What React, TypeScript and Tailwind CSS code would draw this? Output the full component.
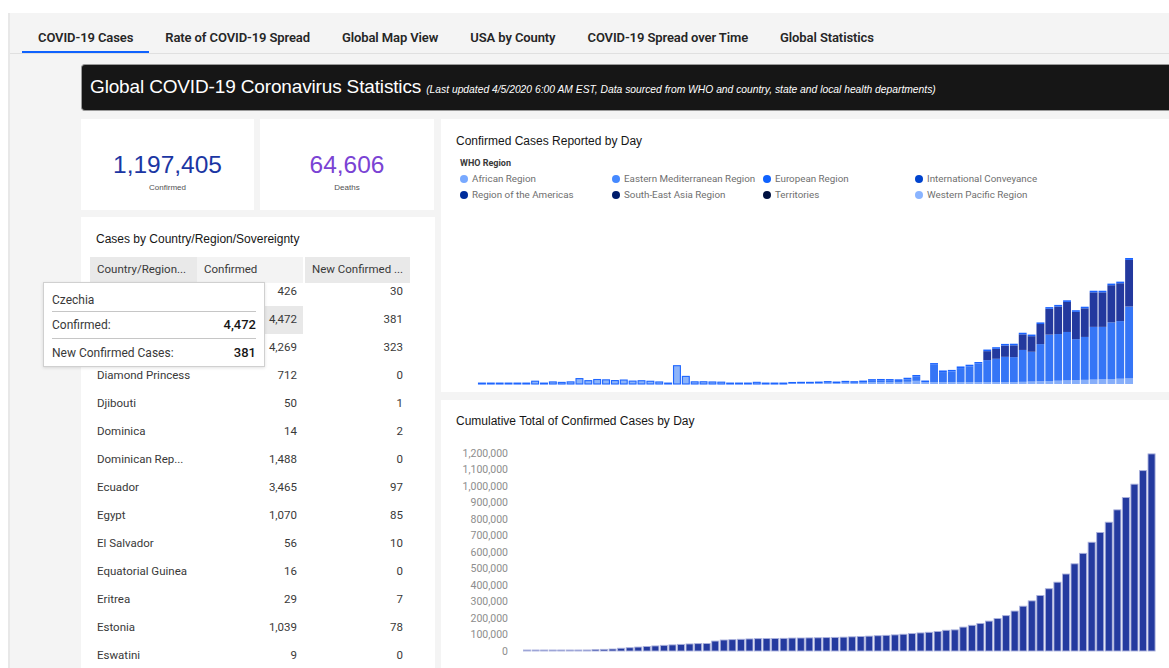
import React from "react";

const cumulative = [
  555, 654, 941, 1434, 2118, 2927, 5578, 6166, 8234, 9927,
  12038, 16787, 19881, 23892, 27635, 30794, 34391, 37120, 40150, 42762,
  44802, 45221, 60368, 66885, 69030, 71224, 73258, 75136, 75639, 76197,
  76819, 78572, 78958, 79561, 80406, 81388, 82746, 84112, 86011,
  88369, 90306, 92840, 95120, 97886, 101801, 105847, 109821, 113590, 118620,
  125875, 128352, 145205, 156101, 167454, 181574, 197102, 214821, 242570, 272208,
  304507, 336953, 378235, 418045, 467653, 529591, 593291, 660706, 720117, 782365, 857487,
  932605, 1013466, 1095917, 1197405,
];

const daily = cumulative.map((v, i) => (i === 0 ? v : v - cumulative[i - 1]));

const tabs = [
  "COVID-19 Cases",
  "Rate of COVID-19 Spread",
  "Global Map View",
  "USA by County",
  "COVID-19 Spread over Time",
  "Global Statistics",
];

const legend = [
  { label: "African Region", color: "#78a9ff" },
  { label: "Eastern Mediterranean Region", color: "#4589ff" },
  { label: "European Region", color: "#0f62fe" },
  { label: "International Conveyance", color: "#0043ce" },
  { label: "Region of the Americas", color: "#002d9c" },
  { label: "South-East Asia Region", color: "#001d6c" },
  { label: "Territories", color: "#001141" },
  { label: "Western Pacific Region", color: "#8ab4ff" },
];

const rows: [string, string, string][] = [
  ["Cyprus", "426", "30"],
  ["Czechia", "4,472", "381"],
  ["Denmark", "4,269", "323"],
  ["Diamond Princess", "712", "0"],
  ["Djibouti", "50", "1"],
  ["Dominica", "14", "2"],
  ["Dominican Rep...", "1,488", "0"],
  ["Ecuador", "3,465", "97"],
  ["Egypt", "1,070", "85"],
  ["El Salvador", "56", "10"],
  ["Equatorial Guinea", "16", "0"],
  ["Eritrea", "29", "7"],
  ["Estonia", "1,039", "78"],
  ["Eswatini", "9", "0"],
];

function DailyChart() {
  const base = 178;
  const k = 126 / 101488;
  const step = 8.865;
  const x0 = 37;
  const bars: React.ReactNode[] = [];
  daily.forEach((t, i) => {
    const x = x0 + i * step;
    const w = step - 1;
    if (i < 35) {
      const h = Math.max(t * k, 1.4);
      bars.push(
        <rect
          key={i}
          x={x + 0.5}
          y={base - h + 0.5}
          width={w - 1}
          height={h - 0.5}
          fill="#8db4f9"
          stroke="#1f66ff"
          strokeWidth={1.1}
        />
      );
      return;
    }
    const wp = i < 50 ? t * 0.35 : i < 60 ? 1500 : 1500 + (i - 60) * 230;
    const am = i >= 57 ? t * Math.min(0.37, 0.26 + (i - 57) * 0.011) : 0;
    const cap = Math.max(t * 0.015, 1300);
    const eu = Math.max(t - wp - am - cap, 0);
    let y = base;
    const segs: [number, string][] = [
      [wp, "#86aefa"],
      [eu, "#3575f6"],
      [am, "#23399e"],
      [cap, "#1a63ff"],
    ];
    segs.forEach(([v, c], j) => {
      const h = v * k;
      if (h <= 0) return;
      y -= h;
      bars.push(<rect key={`${i}-${j}`} x={x} y={y} width={w} height={h} fill={c} />);
    });
  });
  return (
    <svg width="745" height="186" className="mt-auto block">
      {bars}
    </svg>
  );
}

function CumulativeChart() {
  const base = 211;
  const per100k = 16.46;
  const k = per100k / 100000;
  const step = 8.555;
  const x0 = 82;
  const ticks = Array.from({ length: 13 }, (_, i) => i * 100000);
  return (
    <svg width="745" height="228" className="mt-[11px] block">
      {ticks.map((v) => (
        <text
          key={v}
          x={67}
          y={base - v * k}
          textAnchor="end"
          dominantBaseline="central"
          fontSize="10.5"
          fill="#8d8d8d"
          fontFamily="Roboto, sans-serif"
        >
          {v.toLocaleString("en-US")}
        </text>
      ))}
      {cumulative.map((v, i) => {
        const h = Math.max(v * k, 1);
        return (
          <rect
            key={i}
            x={x0 + i * step + 0.5}
            y={base - h}
            width={step - 1.5}
            height={h}
            fill="#243a9f"
            stroke="#aab1dd"
            strokeWidth={0.9}
          />
        );
      })}
    </svg>
  );
}

export default function App() {
  return (
    <div className="relative h-[668px] w-[1169px] overflow-hidden bg-white pl-[8px] pt-[13px] font-['Roboto',sans-serif] text-[#161616]">
      <div className="h-full w-[1200px] border-l-2 border-[#e8e8e8] bg-[#f4f4f4]">
        {/* tab strip */}
        <div className="flex h-[41px] border-b border-[#e0e0e0] pl-[12px]">
          {tabs.map((t, i) => (
            <div
              key={t}
              className={`flex h-[40px] items-center px-[16px] pt-[11px] text-[13px] font-semibold tracking-[-0.1px] text-[#262626] ${
                i === 0 ? "border-b-2 border-[#0f62fe]" : "border-b-2 border-transparent"
              }`}
            >
              {t}
            </div>
          ))}
        </div>

        <div className="w-[1190px] pl-[71px] pt-[10px]">
          {/* title banner */}
          <div className="flex h-[47px] items-center rounded-l-[4px] border border-r-0 border-[#9a9a9a] bg-[#161616] pl-[8px] font-['Liberation_Sans',Arial,sans-serif] text-white">
            <span className="text-[19px] tracking-[-0.15px]">Global COVID-19 Coronavirus Statistics</span>
            <span className="ml-[5px] mt-[4px] whitespace-nowrap text-[10.3px] italic">
              (Last updated 4/5/2020 6:00 AM EST, Data sourced from WHO and country, state and local health departments)
            </span>
          </div>

          <div className="mt-[8px] flex gap-[6px]">
            {/* left column */}
            <div className="flex w-[354px] flex-col">
              <div className="flex gap-[6px]">
                <div className="flex h-[91px] w-[173px] flex-col items-center bg-white pt-[32px] font-['Liberation_Sans',Arial,sans-serif]">
                  <div className="text-[24.5px] leading-[28px] text-[#1b36a3]">1,197,405</div>
                  <div className="mt-[4px] text-[8px] leading-[10px] text-[#525252]">Confirmed</div>
                </div>
                <div className="flex h-[91px] w-[174px] flex-col items-center bg-white pt-[32px] font-['Liberation_Sans',Arial,sans-serif]">
                  <div className="text-[24.5px] leading-[28px] text-[#7a43d4]">64,606</div>
                  <div className="mt-[4px] text-[8px] leading-[10px] text-[#525252]">Deaths</div>
                </div>
              </div>

              <div className="mt-[7px] h-[460px] bg-white pl-[9px] pt-[15px]">
                <div className="pl-[6px] font-['Liberation_Sans',Arial,sans-serif] text-[12px] leading-[14px] text-[#161616]">
                  Cases by Country/Region/Sovereignty
                </div>
                <div className="mt-[11px] flex h-[26px] text-[11.5px] text-[#393939]">
                  <div className="flex w-[107px] items-center bg-[#e9e9e9] pl-[7px]">Country/Region...</div>
                  <div className="flex w-[106px] items-center bg-[#f3f3f3] pl-[7px]">Confirmed</div>
                  <div className="ml-[2px] flex w-[105px] items-center bg-[#e9e9e9] pl-[7px]">New Confirmed ...</div>
                </div>
                <div className="h-[385px] overflow-hidden">
                  <div className="-mt-[5px]">
                    {rows.map(([name, conf, nc], i) => (
                      <div key={name} className="flex h-[28px] text-[11.5px] text-[#393939]">
                        <div className="flex w-[107px] items-center pl-[7px]">{name}</div>
                        <div
                          className={`flex w-[106px] items-center justify-end pr-[6px] ${
                            i === 1 ? "bg-[#e8e8e8]" : ""
                          }`}
                        >
                          {conf}
                        </div>
                        <div className="ml-[2px] flex w-[105px] items-center justify-end pr-[7px]">{nc}</div>
                      </div>
                    ))}
                  </div>
                </div>
              </div>
            </div>

            {/* right column */}
            <div className="flex w-[745px] flex-col gap-[8px]">
              <div className="flex h-[273px] flex-col bg-white">
                <div className="pl-[15px] pt-[14px] font-['Liberation_Sans',Arial,sans-serif] text-[12px] leading-[16px] text-[#161616]">
                  Confirmed Cases Reported by Day
                </div>
                <div className="ml-[19px] mt-[8px] text-[9px] font-bold leading-[12px] text-[#393939]">WHO Region</div>
                <div className="ml-[19px] mt-[2px] grid grid-cols-[152px_151px_152px_200px]">
                  {legend.map((l) => (
                    <div key={l.label} className="flex h-[16px] items-center gap-[4px] text-[9.8px] text-[#6f6f6f]">
                      <span className="h-[8px] w-[8px] shrink-0 rounded-full" style={{ backgroundColor: l.color }} />
                      <span>{l.label}</span>
                    </div>
                  ))}
                </div>
                <DailyChart />
              </div>

              <div className="flex h-[280px] flex-col bg-white">
                <div className="pl-[15px] pt-[13px] font-['Liberation_Sans',Arial,sans-serif] text-[12px] leading-[16px] text-[#161616]">
                  Cumulative Total of Confirmed Cases by Day
                </div>
                <CumulativeChart />
              </div>
            </div>
          </div>
        </div>
      </div>

      {/* hover tooltip over the table */}
      <div className="absolute left-[43px] top-[282px] w-[222px] border border-[#d0d0d0] bg-white px-[8px] pt-[5px] text-[12px] text-[#393939] shadow-[0_1px_3px_rgba(0,0,0,0.12)]">
        <div className="flex h-[24px] items-center border-b border-[#c6c6c6]">Czechia</div>
        <div className="flex h-[27px] items-center justify-between border-b border-[#c6c6c6]">
          <span>Confirmed:</span>
          <span className="text-[13px] font-medium text-[#161616]">4,472</span>
        </div>
        <div className="flex h-[27px] items-center justify-between">
          <span>New Confirmed Cases:</span>
          <span className="text-[13px] font-medium text-[#161616]">381</span>
        </div>
      </div>
    </div>
  );
}
